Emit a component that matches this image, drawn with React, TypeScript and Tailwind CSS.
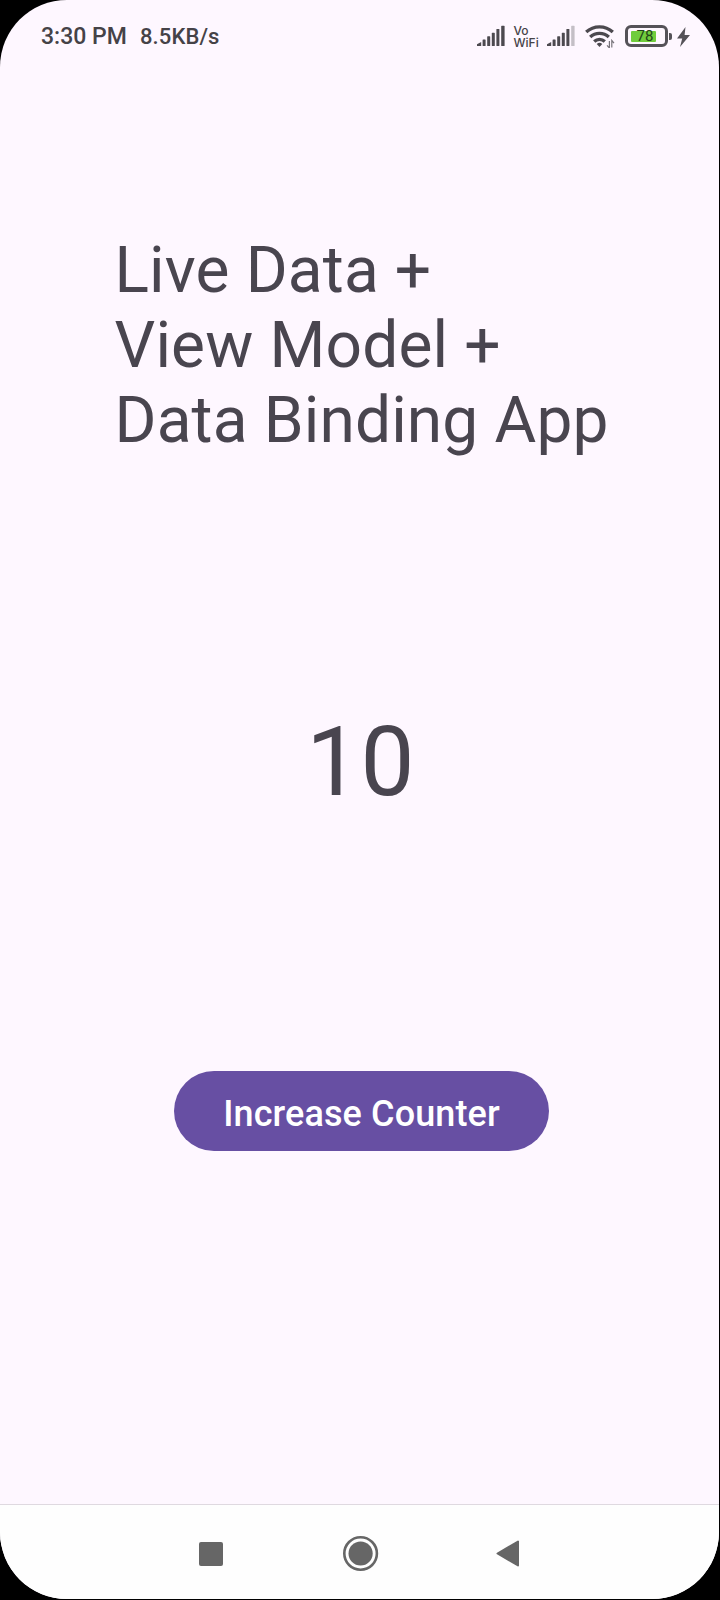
import { useState } from "react";

function Signal({ weak = false }: { weak?: boolean }) {
  return (
    <svg width="28" height="22" viewBox="0 0 28 22" fill="#4c494f">
      <path d="M0 21v-1.8l4.2-2.2v4z" />
      <rect x="5.6" y="14.5" width="3" height="6.5" rx=".6" />
      <rect x="10.2" y="11.2" width="3" height="9.8" rx=".6" />
      <rect x="14.8" y="7.8" width="3" height="13.2" rx=".6" />
      <rect x="19.4" y="4" width="3" height="17" rx=".6" />
      <rect x="24.2" y="0.8" width="3.4" height="20.2" rx=".6" fill={weak ? "#c4bfc6" : "#4c494f"} />
    </svg>
  );
}

function Wifi() {
  return (
    <svg width="30" height="24" viewBox="0 0 30 24" fill="none" stroke="#4c494f">
      <g strokeWidth="3.3">
        <path d="M1.2 8a19.6 19.6 0 0 1 26.6 0" />
        <path d="M5.2 13a13.5 13.5 0 0 1 18.6 0" />
        <path d="M9.2 17.500a7.700 7.700 0 0 1 10.600 0" />
      </g>
      <path d="M11.7 20a4.2 4.2 0 0 1 5.6 0l-2.8 3z" fill="#4c494f" stroke="none" />
      <path d="M24.400 17v7l-2.400-2.600M26.800 23.500v-7l2.200 2.600" strokeWidth="1.2" stroke="#77737a" />
    </svg>
  );
}

function Battery() {
  return (
    <div className="flex items-center">
      <div className="flex h-[22px] w-[43px] items-center rounded-[6px] border-[3px] border-[#555258] pl-[3px]">
        <div className="flex h-[11px] w-[25px] items-center rounded-[1px] bg-[#70cc3c] pl-[6px] text-[15px] leading-none font-normal whitespace-nowrap text-[#24451a]">
          78
        </div>
      </div>
      <div className="ml-[1.5px] h-[7px] w-[2.5px] rounded-r-[2px] bg-[#555258]" />
    </div>
  );
}

function StatusBar() {
  return (
    <header className="flex h-[72px] items-center pr-[29px] pl-[41px] font-medium text-[#454247]">
      <span className="w-[99px] pt-px text-[23px] leading-[27px] whitespace-nowrap">3:30 PM</span>
      <span className="pt-px text-[22px] leading-[27px] tracking-[0.1px] whitespace-nowrap">8.5KB/s</span>
      <div className="ml-auto flex items-center">
        <Signal />
        <div className="mr-[8px] ml-[9px] w-[25px] pt-px font-['Inter',sans-serif] text-[12px] leading-[12px] font-medium whitespace-nowrap">
          <div>Vo</div>
          <div>WiFi</div>
        </div>
        <Signal weak />
        <div className="mr-[10px] ml-[10px]">
          <Wifi />
        </div>
        <Battery />
        <svg className="mt-px ml-[5.5px]" width="13" height="20" viewBox="0 0 13 20" fill="#555258">
          <path d="M8.500 0 0 11.500h5.200L3 20l10-12H7.600z" />
        </svg>
      </div>
    </header>
  );
}

function NavigationBar() {
  return (
    <nav className="h-[95px] border-t border-[#dfd9e0] bg-[#fefefe] text-[#666666]">
      <div className="flex items-center pt-[30px] pl-[199px]">
        <div className="size-[24px] rounded-[2px] bg-[#666666]" />
        <svg className="ml-[119px]" width="38" height="38" viewBox="0 0 38 38">
          <circle cx="18.6" cy="18.5" r="16.3" fill="none" stroke="currentColor" strokeWidth="2.6" />
          <circle cx="18.6" cy="18.5" r="12.1" fill="currentColor" />
        </svg>
        <svg className="ml-[116px]" width="24" height="28" viewBox="0 0 24 28">
          <path d="M22 1.5v24L1.5 13.5z" fill="currentColor" stroke="currentColor" strokeWidth="2" strokeLinejoin="round" />
        </svg>
      </div>
    </nav>
  );
}

export default function App() {
  const [count, setCount] = useState(10);
  return (
    <div className="h-[1600px] w-[720px] overflow-hidden bg-black font-['Roboto',sans-serif]">
      <div className="flex h-[1599px] w-[719px] flex-col overflow-hidden rounded-[67px] bg-[#fef7ff]">
        <StatusBar />
        <main className="flex flex-1 flex-col text-[#49454f]">
          <h1 className="mt-[161px] ml-[114.5px] text-[64px] leading-[75px] font-normal tracking-[0.15px] whitespace-nowrap">
            Live Data +<br />
            View Model +<br />
            Data Binding App
          </h1>
          <p className="mt-[248px] pl-[2px] text-center text-[96px] leading-[112px] tracking-[0.3px]">{count}</p>
          <button
            className="mt-[253px] ml-[174px] h-[80px] w-[375px] rounded-full bg-[#674fa3] pt-[6px] text-[36px] leading-[42px] font-medium tracking-[0.1px] whitespace-nowrap text-white"
            onClick={() => setCount(count + 1)}
          >
            Increase Counter
          </button>
        </main>
        <NavigationBar />
      </div>
    </div>
  );
}
